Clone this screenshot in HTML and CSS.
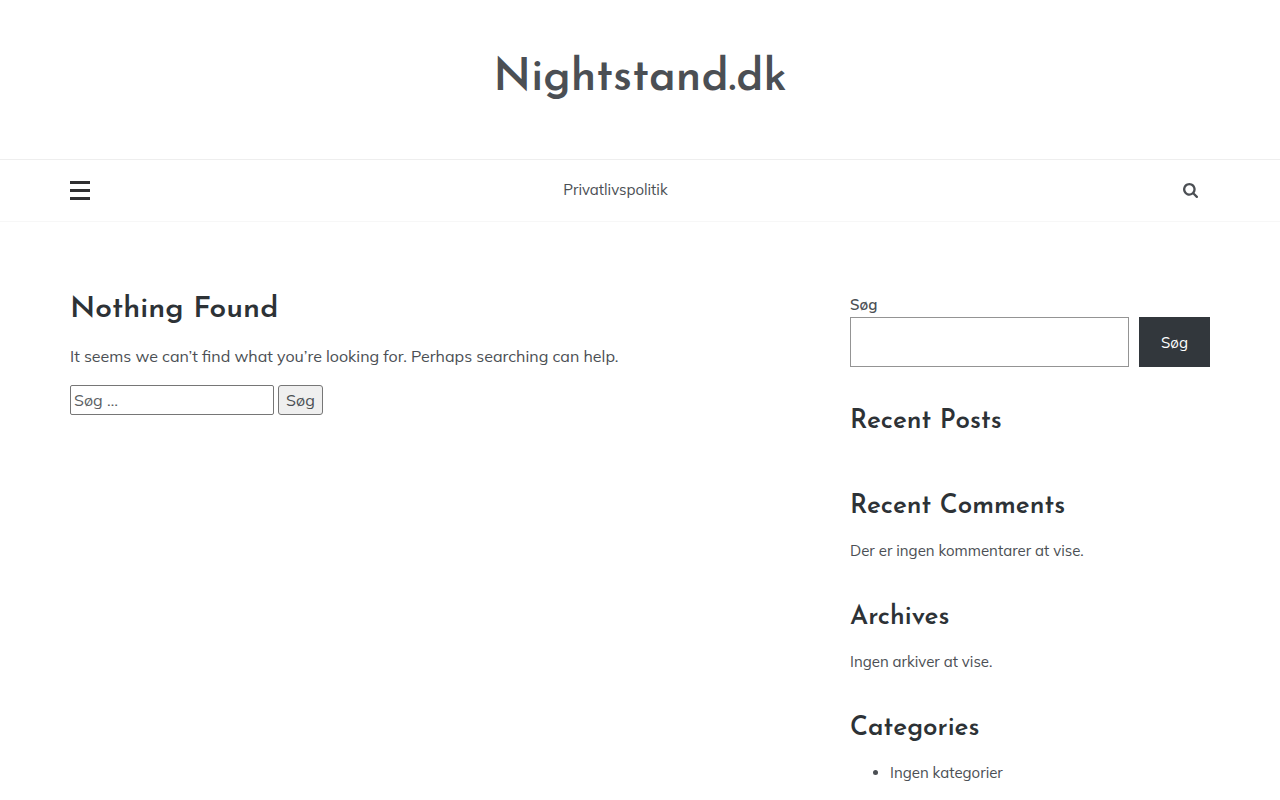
FILE: index.html
```html
<!DOCTYPE html>
<html lang="da">
<head>
<meta charset="utf-8">
<meta name="viewport" content="width=device-width, initial-scale=1">
<title>Nightstand.dk</title>
<link rel="stylesheet" href="styles.css">
</head>
<body>
<header class="site-header">
	<div class="site-branding">
		<p class="site-title"><a href="#">Nightstand.dk</a></p>
	</div>
	<nav class="main-nav">
		<div class="container nav-row">
			<button type="button" class="menu-toggle" aria-label="Menu"><span></span><span></span><span></span></button>
			<a class="nav-link" href="#">Privatlivspolitik</a>
			<button type="button" class="search-toggle" aria-label="Søg">
				<svg viewBox="0 0 1664 1664" width="15" height="15"><path fill="currentColor" d="M1152 704q0-185-131.500-316.500T704 256 387.500 387.500 256 704t131.500 316.500T704 1152t316.500-131.500T1152 704zm512 832q0 52-38 90t-90 38q-54 0-90-38l-343-342q-179 124-399 124-143 0-273.500-55.500t-225-150-150-225T0 704t55.500-273.500 150-225 225-150T704 0t273.500 55.500 225 150 150 225T1408 704q0 220-124 399l343 343q37 37 37 90z"/></svg>
			</button>
		</div>
	</nav>
</header>
<div class="container content">
	<main class="primary">
		<h1 class="page-title">Nothing Found</h1>
		<p>It seems we can’t find what you’re looking for. Perhaps searching can help.</p>
		<form class="search-form">
			<input type="search" class="search-field" placeholder="Søg …" aria-label="Søg efter">
			<input type="submit" class="search-submit" value="Søg">
		</form>
	</main>
	<aside class="sidebar">
		<section class="widget widget-search">
			<form>
				<label for="widget-search">Søg</label>
				<div class="search-row">
					<input type="search" id="widget-search">
					<button type="submit">Søg</button>
				</div>
			</form>
		</section>
		<section class="widget">
			<h2>Recent Posts</h2>
			<ul class="post-list"></ul>
		</section>
		<section class="widget">
			<h2>Recent Comments</h2>
			<p>Der er ingen kommentarer at vise.</p>
		</section>
		<section class="widget">
			<h2>Archives</h2>
			<p>Ingen arkiver at vise.</p>
		</section>
		<section class="widget">
			<h2>Categories</h2>
			<ul>
				<li>Ingen kategorier</li>
			</ul>
		</section>
	</aside>
</div>
</body>
</html>
```
FILE: styles.css
```css
* {
	box-sizing: border-box;
}
body {
	margin: 0;
	background: #fff;
	color: #4b4f54;
	font-family: Muli, Mulish, "Open Sans", sans-serif;
	font-size: 16px;
	line-height: 26px;
}
a {
	color: inherit;
	text-decoration: none;
}
h1, h2, p, ul {
	margin: 0;
}
h1, h2, .site-title {
	font-family: "Josefin Sans", Lato, sans-serif;
	font-weight: 600;
}
input, button {
	font: inherit;
	color: inherit;
}
.container {
	max-width: 1140px;
	margin: 0 auto;
}

/* header */
.site-branding {
	padding: 49px 0 50px;
	text-align: center;
}
.site-title {
	font-size: 45px;
	line-height: 60px;
}
.main-nav {
	border-top: 1px solid #eee;
	border-bottom: 1px solid #f7f7f7;
}
.nav-row {
	display: flex;
	align-items: center;
	justify-content: space-between;
	height: 61px;
}
.menu-toggle, .search-toggle {
	border: 0;
	padding: 0;
	background: none;
	cursor: pointer;
}
.menu-toggle {
	display: flex;
	flex-direction: column;
	gap: 5px;
	width: 20px;
}
.menu-toggle span {
	height: 3px;
	background: #2f2f31;
}
.nav-link {
	padding-bottom: 2px;
	font-size: 15px;
}
.search-toggle {
	display: flex;
	padding: 0 12px 0 42px;
}

/* content */
.content {
	display: grid;
	grid-template-columns: minmax(0, 1fr) 360px;
	gap: 60px;
	padding: 70px 0 15px;
}
.page-title {
	margin-bottom: 15px;
	color: #2d3236;
	font-size: 30px;
	line-height: 36px;
}
.search-form {
	display: flex;
	gap: 4px;
	margin-top: 16px;
}
.search-field {
	width: 204px;
	height: 30px;
	padding: 1px 3px;
	border: 1px solid #767676;
	border-radius: 2px;
}
.search-submit {
	width: 45px;
	height: 30px;
	padding: 0;
	border: 1px solid #767676;
	border-radius: 3px;
	background: #efefef;
}
::placeholder {
	color: #5c5f64;
}

/* sidebar */
.sidebar {
	font-size: 15px;
	line-height: 25px;
}
.widget {
	margin-bottom: 40px;
}
.widget:last-child {
	margin-bottom: 0;
}
.widget h2 {
	margin-bottom: 16px;
	color: #2d3236;
	font-size: 26px;
	line-height: 30px;
}
.widget ul {
	padding-left: 40px;
}
.widget .post-list {
	margin-bottom: 55px;
}
.widget-search label {
	display: block;
	font-weight: 600;
}
.search-row {
	display: flex;
	gap: 10px;
}
.search-row input {
	flex: 1;
	min-width: 0;
	height: 50px;
	border: 1px solid #949494;
}
.search-row button {
	width: 71px;
	border: 0;
	background: #32373c;
	color: #fff;
}
```
